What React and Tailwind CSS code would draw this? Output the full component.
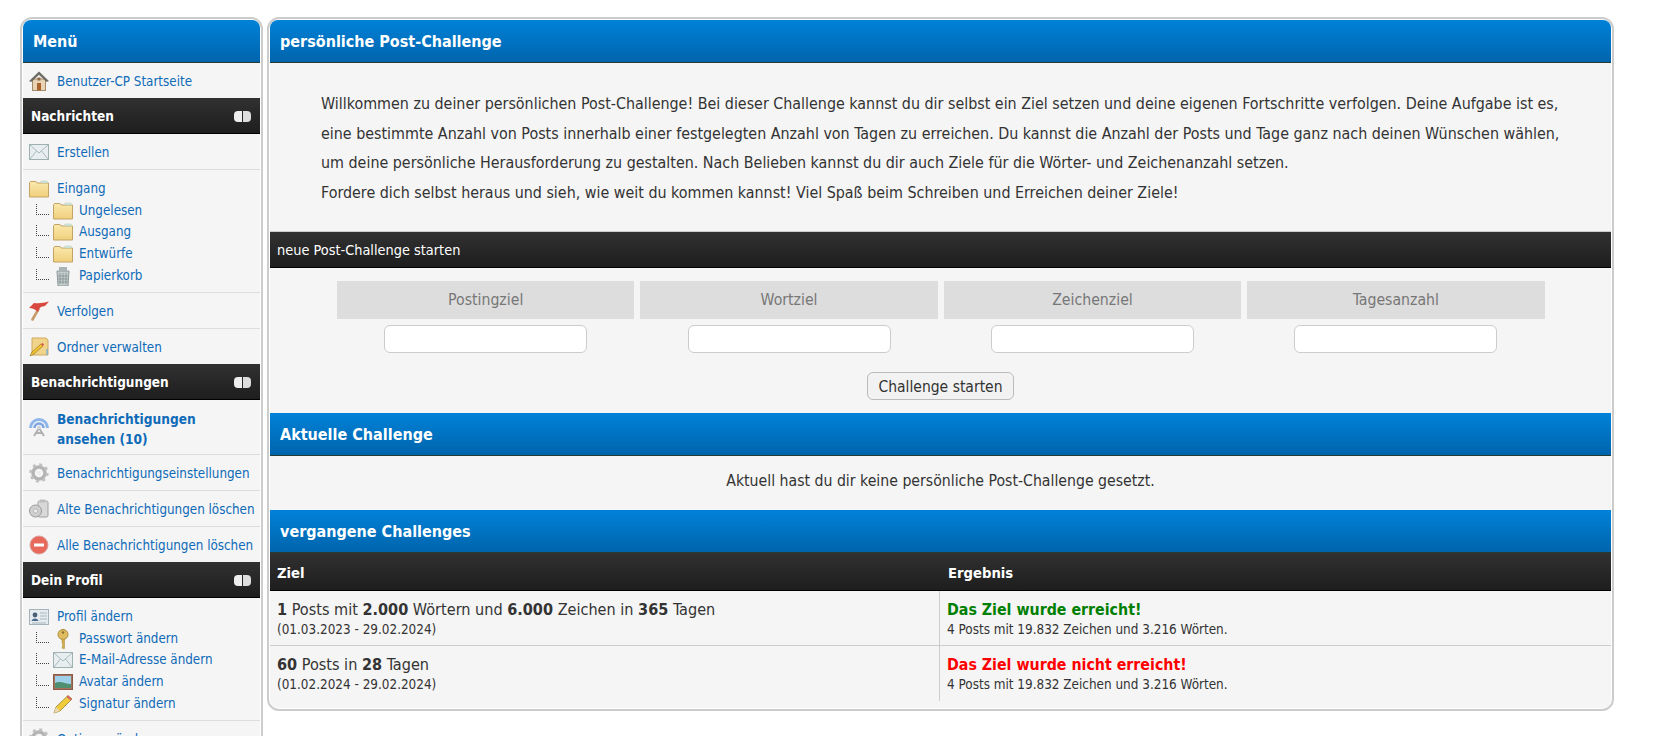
import React from "react";

const FONT = "font-['DejaVu_Sans_Condensed','DejaVu_Sans',sans-serif] [font-stretch:condensed]";

function Folder() {
  return (
    <svg viewBox="0 0 20 18" className="w-5 h-[18px]">
      <defs>
        <linearGradient id="fold" x1="0" y1="0" x2="0" y2="1">
          <stop offset="0" stopColor="#fbe9ad" />
          <stop offset="1" stopColor="#efcf7c" />
        </linearGradient>
      </defs>
      <path d="M0.5 3 L1.5 1.5 H7 L8 3 H19.5 V17 H0.5 Z" fill="url(#fold)" stroke="#c4a466" />
      <path d="M12 1 H18 L19 3 H12 Z" fill="#cfe6e6" stroke="#b9c9a0" strokeWidth="0.5" />
    </svg>
  );
}

function Mail() {
  return (
    <svg viewBox="0 0 20 16" className="w-5 h-4">
      <rect x="0.5" y="0.5" width="19" height="15" fill="#e8eef0" stroke="#9fb0b0" />
      <path d="M1 1 L10 9 L19 1 M1 15 L7.5 7 M19 15 L12.5 7" fill="none" stroke="#a9bcbc" />
    </svg>
  );
}

function Home() {
  return (
    <svg viewBox="0 0 20 20" className="w-5 h-5">
      <rect x="3.5" y="8" width="13" height="11.5" fill="#e8d3b4" stroke="#a48a6c" />
      <path d="M0.5 10 L10 0.8 L19.5 10 L17.5 10.5 L10 3.5 L2.5 10.5 Z" fill="#6d6a64" stroke="#55524c" strokeWidth="0.5" />
      <rect x="8" y="12" width="4" height="7.5" fill="#a8632c" />
      <rect x="8.5" y="6.5" width="3" height="3" fill="#8d6a44" />
    </svg>
  );
}

function Trash() {
  return (
    <svg viewBox="0 0 20 20" className="w-5 h-5">
      <path d="M4 5 H16 L15 20 H5 Z" fill="#c3cbcb" stroke="#8f9a9a" />
      <rect x="6" y="1" width="8" height="4" fill="#aab4b4" />
      <path d="M7 7 V18 M10 7 V18 M13 7 V18 M5 10 H15 M5 13 H15 M5 16 H15" stroke="#7f8c8c" strokeWidth="0.7" />
    </svg>
  );
}

function Flag() {
  return (
    <svg viewBox="0 0 20 20" className="w-5 h-5">
      <path d="M3.5 18.5 L9.5 8" stroke="#c79a6a" strokeWidth="2.6" strokeLinecap="round" />
      <path d="M0 7 L5 2 Q12 3 20 0.5 L16 5 Q12 5.5 10.5 7 L9 11 Q5 7 0 7 Z" fill="#d9483e" />
    </svg>
  );
}

function NotePencil() {
  return (
    <svg viewBox="0 0 20 20" className="w-5 h-5">
      <path d="M3 1 H17 L19 3 V18 H3 Z" fill="#f0d48c" stroke="#cfaa5e" />
      <path d="M1 19 L3 15 L12 7 L14 9 L5 17 Z" fill="#f2c230" stroke="#8a6a20" strokeWidth="0.6" />
      <path d="M12 7 L14 9 L15 7.5 L13.5 6 Z" fill="#e05050" />
      <path d="M18 12 V18" stroke="#7fb0d0" strokeWidth="1.5" />
    </svg>
  );
}

function Radar() {
  return (
    <svg viewBox="0 0 20 20" className="w-5 h-5" fill="none">
      <path d="M1.5 11 A8.5 8.5 0 0 1 18.5 11" stroke="#8fb6ea" strokeWidth="3" />
      <path d="M5.5 11 A4.5 4.5 0 0 1 14.5 11" stroke="#7ba4e0" strokeWidth="2.5" />
      <path d="M10 11 L5 19 M10 11 L15 19 M7 16 H13" stroke="#b0b0b0" strokeWidth="2" />
      <circle cx="10" cy="10.5" r="2" fill="#cfd6dc" />
    </svg>
  );
}

function Gear() {
  return (
    <svg viewBox="0 0 20 20" className="w-5 h-5" fill="none">
      <circle cx="10" cy="10" r="6" stroke="#b4b4b4" strokeWidth="3.5" />
      <circle cx="10" cy="10" r="8.5" stroke="#c0c0c0" strokeWidth="2.4" strokeDasharray="3 3.67" />
      <circle cx="10" cy="10" r="2" fill="#ececec" />
    </svg>
  );
}

function Cans() {
  return (
    <svg viewBox="0 0 20 20" className="w-5 h-5">
      <rect x="9" y="2" width="10" height="16" rx="1.5" fill="#d8d8d8" stroke="#a0a0a0" />
      <rect x="11" y="0.5" width="5" height="3" fill="#bdbdbd" />
      <circle cx="6.5" cy="12" r="6" fill="#cfcfcf" stroke="#9a9a9a" />
      <circle cx="6.5" cy="12" r="2" fill="#f0f0f0" stroke="#a0a0a0" strokeWidth="0.6" />
    </svg>
  );
}

function Stop() {
  return (
    <svg viewBox="0 0 20 20" className="w-5 h-5">
      <circle cx="10" cy="10" r="9" fill="#e8685c" stroke="#d9a09a" />
      <rect x="5" y="8.5" width="10" height="3" fill="#fff" />
    </svg>
  );
}

function IdCard() {
  return (
    <svg viewBox="0 0 20 16" className="w-5 h-4">
      <rect x="0.5" y="0.5" width="19" height="15" fill="#e4ecef" stroke="#a3b3b8" />
      <circle cx="6" cy="6" r="2.4" fill="#4a5f78" />
      <path d="M2.5 12 C3 8.5 9 8.5 9.5 12 Z" fill="#4a6a90" />
      <path d="M11 4 H18 M11 7 H18 M11 10 H18 M3 14 H17" stroke="#a9b8bc" />
    </svg>
  );
}

function KeyIcon() {
  return (
    <svg viewBox="0 0 20 20" className="w-5 h-5">
      <circle cx="10" cy="5.5" r="5" fill="#e0bd60" stroke="#a98a36" />
      <circle cx="10" cy="3.5" r="1.3" fill="#8a6f2c" />
      <path d="M9 10 H11.5 V19.5 H9.5 L9 18 L10 17 L9 16 L10 15 L9 14 Z" fill="#d3ac4e" stroke="#a98a36" strokeWidth="0.5" />
    </svg>
  );
}

function Picture() {
  return (
    <svg viewBox="0 0 20 16" className="w-5 h-4">
      <rect x="0.5" y="0.5" width="19" height="15" fill="#a5705c" stroke="#8b5a48" />
      <rect x="2" y="2" width="16" height="12" fill="#9fd0ea" />
      <path d="M2 9 C7 6 12 10 18 10 V14 H2 Z" fill="#4e8f70" />
    </svg>
  );
}

function Pencil() {
  return (
    <svg viewBox="0 0 20 20" className="w-5 h-5">
      <path d="M1 19 L3 13 L15 1.5 L19 5 L7 17 Z" fill="#f0cc3c" stroke="#8a7420" strokeWidth="0.7" />
      <path d="M15 1.5 L19 5 L17.5 6.5 L13.5 3 Z" fill="#d9646a" />
      <path d="M1 19 L3 13 L7 17 Z" fill="#ecd9b4" />
    </svg>
  );
}

function Toggle() {
  return (
    <span className="flex gap-px">
      <span className="w-2 h-[11px] rounded-l-[4px] bg-[#eeeeee]" />
      <span className="w-2 h-[11px] rounded-r-[4px] bg-[#dddddd]" />
    </span>
  );
}

function SubRow({ icon, label }) {
  return (
    <div className="flex items-center h-[21.7px] pl-[13px]">
      <span className="w-[13px] h-[11px] mb-[3px] border-l border-b border-dotted border-[#444]" />
      <span className="w-5 ml-[4px] flex justify-center shrink-0">{icon}</span>
      <a className="ml-[6px] text-[#0f6bb8] text-[13.3px]">{label}</a>
    </div>
  );
}

function Row({ icon, label, rounded, h = "h-[35px]", border = true, bold }) {
  return (
    <div className={`flex items-center pl-[6px] ${h} ${border ? "border-b border-[#dddddd]" : ""} ${rounded ? "rounded-b-xl" : ""}`}>
      <span className="w-5 flex justify-center shrink-0">{icon}</span>
      <a className={`ml-[8px] text-[#0f6bb8] leading-5 pt-[3px] ${bold ? "font-bold text-[13.6px]" : "text-[13.3px]"}`}>{label}</a>
    </div>
  );
}

function DarkBar({ children, className = "" }) {
  return (
    <div className={`flex items-center bg-gradient-to-b from-[#313131] to-[#1e1e1e] border-b border-black text-white ${className}`}>
      {children}
    </div>
  );
}

function SideHead({ label }) {
  return (
    <DarkBar className="h-9 pl-[8px] pr-[9px] justify-between text-[13.5px] font-bold pt-px">
      <span>{label}</span>
      <Toggle />
    </DarkBar>
  );
}

function BlueBar({ label, className = "" }) {
  return (
    <div className={`flex items-center h-[43px] pl-[10px] pt-px bg-gradient-to-b from-[#0082d9] to-[#0064ac] border-b border-[#263c30] text-white text-[16px] font-bold ${className}`}>
      {label}
    </div>
  );
}

function GoalField({ label }) {
  return (
    <div className="flex flex-col items-center gap-[6px]">
      <div className="w-full h-[38px] flex items-center justify-center bg-[#dddddd] text-[#777777] text-[15.7px]">
        {label}
      </div>
      <input className="w-[203px] h-7 bg-white border border-[#cccccc] rounded-md" />
    </div>
  );
}

function PastRow({ goal, range, result, resultClass, last }) {
  return (
    <div className={`flex h-[55px] ${last ? "" : "border-b border-[#cccccc]"}`}>
      <div className="w-[670px] pl-[7px] pt-[9px] border-r border-[#cccccc]">
        <div className="text-[16.1px] leading-[20px] text-[#333333]">{goal}</div>
        <div className="text-[13.4px] leading-[20px] text-[#333333]">{range}</div>
      </div>
      <div className="pl-[7px] pt-[9px]">
        <div className={`text-[15.8px] leading-[20px] font-bold ${resultClass}`}>{result}</div>
        <div className="text-[13.4px] leading-[20px] text-[#333333]">4 Posts mit 19.832 Zeichen und 3.216 Wörten.</div>
      </div>
    </div>
  );
}

export default function App() {
  return (
    <div className={`h-[736px] overflow-hidden bg-white flex items-start gap-[4px] pl-[20px] pt-[17px] ${FONT}`}>
      {/* sidebar */}
      <div className="w-[243px] shrink-0 border-2 border-[#cccccc] rounded-xl p-px bg-white">
        <div className="bg-[#f5f5f5] rounded-t-lg">
          <div className="flex items-center h-[43px] pl-[10px] pt-px rounded-t-lg bg-gradient-to-b from-[#0082d9] to-[#0064ac] border-b border-[#263c30] text-white text-[16px] font-bold">
            Menü
          </div>
          <Row icon={<Home />} label="Benutzer-CP Startseite" border={false} rounded />

          <SideHead label="Nachrichten" />
          <Row icon={<Mail />} label="Erstellen" h="h-[36px]" />
          <div className="border-b border-[#dddddd] h-[123px] pt-[8px]">
            <div className="flex items-center h-[21.7px] pl-[6px]">
              <span className="w-5 flex justify-center shrink-0"><Folder /></span>
              <a className="ml-[8px] text-[#0f6bb8] text-[13.3px] pt-px">Eingang</a>
            </div>
            <SubRow icon={<Folder />} label="Ungelesen" />
            <SubRow icon={<Folder />} label="Ausgang" />
            <SubRow icon={<Folder />} label="Entwürfe" />
            <SubRow icon={<Trash />} label="Papierkorb" />
          </div>
          <Row icon={<Flag />} label="Verfolgen" h="h-[36px]" />
          <Row icon={<NotePencil />} label="Ordner verwalten" border={false} rounded />

          <SideHead label="Benachrichtigungen" />
          <Row icon={<Radar />} label={<>Benachrichtigungen<br />ansehen (10)</>} h="h-[55px]" bold />
          <Row icon={<Gear />} label="Benachrichtigungseinstellungen" h="h-[36px]" />
          <Row icon={<Cans />} label="Alte Benachrichtigungen löschen" h="h-[36px]" />
          <Row icon={<Stop />} label="Alle Benachrichtigungen löschen" border={false} rounded />

          <SideHead label="Dein Profil" />
          <div className="border-b border-[#dddddd] h-[123px] pt-[8px]">
            <div className="flex items-center h-[21.7px] pl-[6px]">
              <span className="w-5 flex justify-center shrink-0"><IdCard /></span>
              <a className="ml-[8px] text-[#0f6bb8] text-[13.3px]">Profil ändern</a>
            </div>
            <SubRow icon={<KeyIcon />} label="Passwort ändern" />
            <SubRow icon={<Mail />} label="E-Mail-Adresse ändern" />
            <SubRow icon={<Picture />} label="Avatar ändern" />
            <SubRow icon={<Pencil />} label="Signatur ändern" />
          </div>
          <Row icon={<Gear />} label="Optionen ändern" />
        </div>
      </div>

      {/* main box */}
      <div className="w-[1347px] shrink-0 border-2 border-[#cccccc] rounded-xl p-px bg-white">
        <div className="bg-[#f5f5f5] rounded-lg pb-[7px]">
          <BlueBar label="persönliche Post-Challenge" className="rounded-t-lg" />
          <div className="h-[169px] pl-[51px] pr-10 pt-[26px] text-[15.9px] leading-[29.6px] text-[#333333] border-b border-[#cccccc]">
            Willkommen zu deiner persönlichen Post-Challenge! Bei dieser Challenge kannst du dir selbst ein Ziel setzen und deine eigenen Fortschritte verfolgen. Deine Aufgabe ist es, eine bestimmte Anzahl von Posts innerhalb einer festgelegten Anzahl von Tagen zu erreichen. Du kannst die Anzahl der Posts und Tage ganz nach deinen Wünschen wählen, um deine persönliche Herausforderung zu gestalten. Nach Belieben kannst du dir auch Ziele für die Wörter- und Zeichenanzahl setzen.
            <br />
            Fordere dich selbst heraus und sieh, wie weit du kommen kannst! Viel Spaß beim Schreiben und Erreichen deiner Ziele!
          </div>
          <DarkBar className="h-9 pl-[7px] pt-[3px] text-[14.4px]">neue Post-Challenge starten</DarkBar>
          <div className="grid grid-cols-[297.4px_297.4px_297.4px_297.4px] gap-x-[6px] pl-[67px] pt-[13px]">
            <GoalField label="Postingziel" />
            <GoalField label="Wortziel" />
            <GoalField label="Zeichenziel" />
            <GoalField label="Tagesanzahl" />
          </div>
          <div className="flex justify-center pt-[19px] pb-[13px]">
            <button className="h-7 px-[10px] pt-[3px] border border-[#bbbbbb] rounded-md bg-[#f2f2f2] text-[15.5px] text-[#333333]">
              Challenge starten
            </button>
          </div>
          <BlueBar label="Aktuelle Challenge" />
          <div className="h-[54px] pb-1 flex items-center justify-center text-[15.7px] text-[#333333]">
            Aktuell hast du dir keine persönliche Post-Challenge gesetzt.
          </div>
          <BlueBar label="vergangene Challenges" />
          <DarkBar className="h-[38px] pt-[3px] text-[14.7px] font-bold">
            <span className="w-[670px] pl-[7px]">Ziel</span>
            <span className="pl-[8px]">Ergebnis</span>
          </DarkBar>
          <PastRow
            goal={<><b>1</b> Posts mit <b>2.000</b> Wörtern und <b>6.000</b> Zeichen in <b>365</b> Tagen</>}
            range="(01.03.2023 - 29.02.2024)"
            result="Das Ziel wurde erreicht!"
            resultClass="text-[#008000]"
          />
          <PastRow
            goal={<><b>60</b> Posts in <b>28</b> Tagen</>}
            range="(01.02.2024 - 29.02.2024)"
            result="Das Ziel wurde nicht erreicht!"
            resultClass="text-[#ff0000]"
            last
          />
        </div>
      </div>
    </div>
  );
}
